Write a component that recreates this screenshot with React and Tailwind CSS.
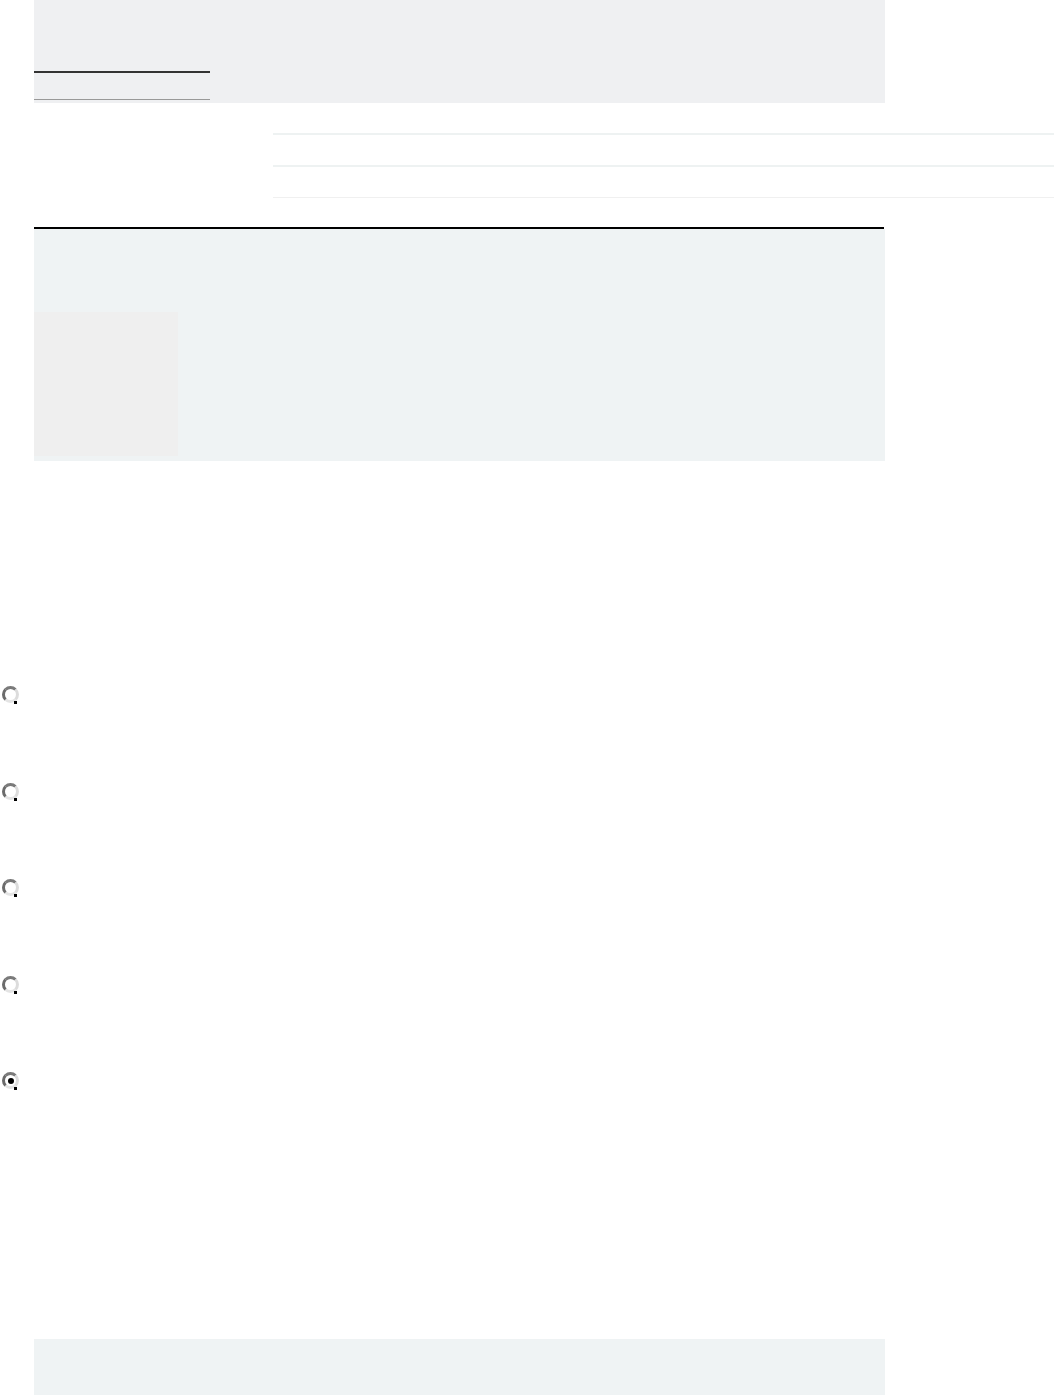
import React from "react";

function Radio({ checked }) {
  return (
    <div className="relative w-[17px] h-[17px] rounded-full border-[3px] border-t-[#7a7a7a] border-l-[#6b6b6b] border-r-[#dcdcdc] border-b-[#e4e4e4] bg-white flex items-center justify-center">
      {checked && <div className="w-[6px] h-[6px] rounded-full bg-black" />}
      <div className="absolute left-[9px] bottom-[-4px] w-[3px] h-[3px] bg-black" />
    </div>
  );
}

export default function App() {
  const options = [false, false, false, false, true];

  return (
    <div className="w-[1054px] min-h-[1395px] bg-white font-['Liberation_Sans',sans-serif]">
      {/* header panel with tab */}
      <div className="pl-[34px]">
        <div className="w-[851px] h-[103px] bg-[#eff0f2] pt-[71px]">
          <div className="w-[176px] h-[29px] border-t-2 border-t-[#333333] border-b border-b-[#999999]" />
        </div>
      </div>

      {/* list rows */}
      <div className="pl-[273px] pt-[30px]">
        <div className="h-[2px] bg-[#eef2f2]" />
        <div className="h-[2px] bg-[#eef2f2] mt-[30px]" />
        <div className="h-[1px] bg-[#f0f0f0] mt-[30px]" />
      </div>

      {/* main panel */}
      <div className="pl-[34px] pt-[29px]">
        <div className="w-[850px] h-[2px] bg-black" />
        <div className="w-[851px] h-[232px] bg-[#eff3f4] pt-[83px]">
          <div className="w-[144px] h-[144px] bg-[#efefef]" />
        </div>
      </div>

      {/* options */}
      <div className="pl-[2px] pt-[225px] flex flex-col gap-[79.5px]">
        {options.map((c, i) => (
          <Radio key={i} checked={c} />
        ))}
      </div>

      {/* footer panel */}
      <div className="pl-[34px] pt-[250px]">
        <div className="w-[851px] h-[56px] bg-[#eff3f4]" />
      </div>
    </div>
  );
}
